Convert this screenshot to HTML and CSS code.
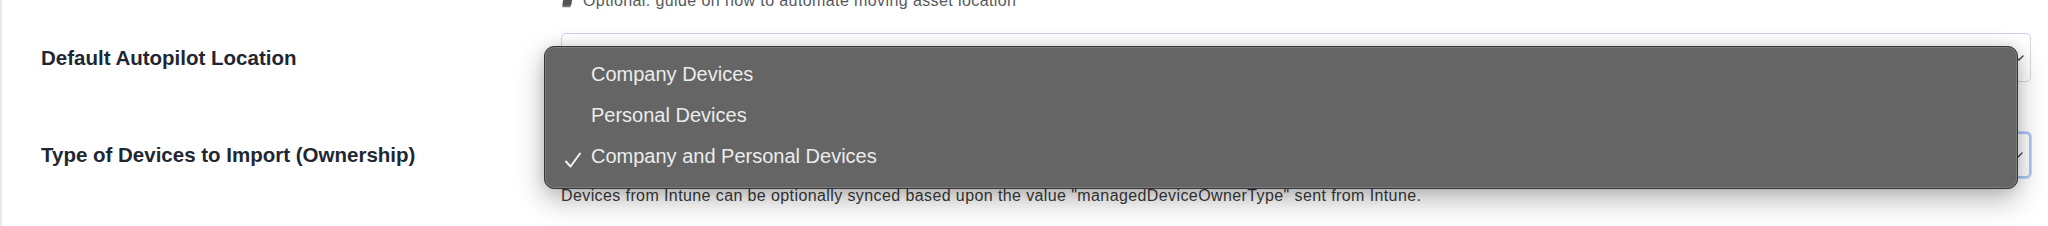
FILE: index.html
```html
<!DOCTYPE html>
<html>
<head>
<meta charset="utf-8">
<link rel="stylesheet" href="styles.css">
</head>
<body>
<div class="page">
  <div class="form">
    <div class="cell-label"></div>
    <div class="hint hint-top">
      <svg class="book" viewBox="0 0 12 14" width="12" height="14"><rect x="2" y="1" width="9" height="11" rx="1.5" fill="#555"/><path d="M2 11.5h8.5v1.8H3.5A1.5 1.5 0 0 1 2 11.5z" fill="#777"/></svg>
      <span>Optional: guide on how to automate moving asset location</span>
    </div>

    <div class="cell-label row1"><span class="label">Default Autopilot Location</span></div>
    <div class="select row1">
      <span class="value"></span>
      <svg class="chev" viewBox="0 0 10 6" width="10" height="6"><path d="M1 1l4 4 4-4" fill="none" stroke="#444" stroke-width="1.4" stroke-linecap="round" stroke-linejoin="round"/></svg>
    </div>

    <div class="cell-label row2"><span class="label">Type of Devices to Import (Ownership)</span></div>
    <div class="select select-focus row2">
      <span class="value"></span>
      <svg class="chev" viewBox="0 0 10 6" width="10" height="6"><path d="M1 1l4 4 4-4" fill="none" stroke="#444" stroke-width="1.4" stroke-linecap="round" stroke-linejoin="round"/></svg>
    </div>

    <div class="cell-label"></div>
    <div class="hint hint-bottom">Devices from Intune can be optionally synced based upon the value "managedDeviceOwnerType" sent from Intune.</div>
  </div>

  <div class="menu">
    <div class="item"><span class="check"></span><span>Company Devices</span></div>
    <div class="item"><span class="check"></span><span>Personal Devices</span></div>
    <div class="item"><span class="check"><svg viewBox="0 0 18 16" width="18" height="16"><path d="M2 9.5l4.5 5L16 1.5" fill="none" stroke="#f2f2f2" stroke-width="2" stroke-linecap="round" stroke-linejoin="round"/></svg></span><span>Company and Personal Devices</span></div>
  </div>
</div>
</body>
</html>
```

FILE: styles.css
```css
html, body {
  margin: 0;
  padding: 0;
  background: #ffffff;
  width: 2048px;
  height: 226px;
  overflow: hidden;
}

body {
  font-family: "Liberation Sans", Arial, sans-serif;
  position: relative;
}

.page {
  display: flow-root;
  height: 226px;
  border-left: 2px solid #e6e8ec;
  box-sizing: border-box;
  position: relative;
}

.form {
  display: grid;
  grid-template-columns: 520px 1fr;
  padding-left: 39px;
  padding-right: 17px;
  margin-top: -9px;
}

.hint {
  font-size: 16px;
  line-height: 20px;
  letter-spacing: 0.4px;
  color: #3a3a3a;
}

.hint-top {
  display: flex;
  align-items: center;
  gap: 10px;
  color: #555a60;
  height: 20px;
}

.book {
  flex: none;
  transform: skewX(-10deg);
}

.cell-label {
  display: flex;
  align-items: center;
}

.row1 {
  margin-top: 22px;
  height: 49px;
}

.row2 {
  margin-top: 50px;
  height: 46px;
}

.label {
  font-size: 20.5px;
  line-height: 24px;
  font-weight: 700;
  color: #1f2733;
}

.select {
  box-sizing: border-box;
  border: 1px solid #d3d8e2;
  border-top-color: #c9d2e4;
  border-radius: 5px;
  display: flex;
  align-items: center;
  justify-content: space-between;
  padding: 0 6px 0 16px;
  font-size: 16px;
  color: #222;
  background: #fff;
}

.select-focus {
  border: 2px solid #a9c6f5;
  box-shadow: 0 0 0 1px #c8dafa;
}

.chev {
  flex: none;
}

.hint-bottom {
  margin-top: 8px;
}

.menu {
  position: absolute;
  left: 542px;
  top: 46px;
  width: 1474px;
  height: 143px;
  box-sizing: border-box;
  background: #646564;
  border: 1px solid #353535;
  border-radius: 10px;
  box-shadow: inset 0 0 0 1px rgba(255, 255, 255, 0.16), 0 10px 28px rgba(0, 0, 0, 0.3), 0 0 12px rgba(0, 0, 0, 0.1);
  padding-top: 7px;
  font-size: 20px;
  color: #ececec;
}

.item {
  height: 41px;
  display: flex;
  align-items: center;
}

.check {
  width: 46px;
  flex: none;
  display: flex;
  justify-content: flex-end;
  padding-right: 9px;
  box-sizing: border-box;
  padding-top: 6px;
}
```
